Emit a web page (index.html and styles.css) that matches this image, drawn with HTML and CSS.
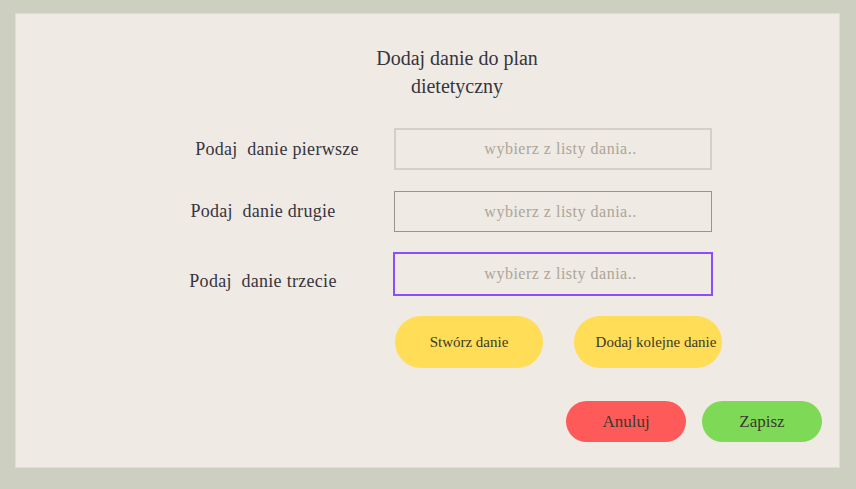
FILE: index.html
```html
<!DOCTYPE html>
<html lang="pl">
<head>
<meta charset="utf-8">
<title>Dodaj danie</title>
<link rel="stylesheet" href="styles.css">
</head>
<body>
<div class="panel">
  <h1 class="title">Dodaj danie do plan dietetyczny</h1>
  <div class="form">
    <div class="row">
      <label class="label">Podaj&nbsp; danie pierwsze</label>
      <div class="field">wybierz z listy dania..</div>
    </div>
    <div class="row">
      <label class="label label-short">Podaj&nbsp; danie drugie</label>
      <div class="field field-dark">wybierz z listy dania..</div>
    </div>
    <div class="row row-focus">
      <label class="label label-short label-low">Podaj&nbsp; danie trzecie</label>
      <div class="field field-focus">wybierz z listy dania..</div>
    </div>
    <div class="row actions">
      <button class="pill yellow">Stwórz danie</button>
      <button class="pill yellow yellow-wide">Dodaj kolejne danie</button>
    </div>
  </div>
  <div class="footer">
    <button class="pill btn red">Anuluj</button>
    <button class="pill btn green">Zapisz</button>
  </div>
</div>
</body>
</html>
```
FILE: styles.css
```css
* { box-sizing: border-box; }
html, body { margin: 0; padding: 0; }
body {
  background: #cdcfc0;
  width: 856px;
  height: 489px;
  padding: 13px 16px 21px 15px;
  font-family: "Liberation Serif", "DejaVu Serif", serif;
  color: #36353d;
}
.panel {
  background: #efeae4;
  border: 1px solid #dedfd2;
  width: 825px;
  height: 455px;
  display: flex;
  flex-direction: column;
}
.title {
  font-weight: normal;
  font-size: 20px;
  line-height: 28px;
  text-align: center;
  width: 200px;
  margin: 30px 0 0 341px;
}
.form {
  margin-top: 28px;
  display: flex;
  flex-direction: column;
  gap: 21px;
}
.row {
  display: flex;
  align-items: center;
}
.label {
  width: 234px;
  margin-left: 144px;
  text-align: center;
  font-size: 18px;
  letter-spacing: 0.3px;
}
.label-short { padding-right: 28px; }
.label-low { padding-top: 14px; }
.field {
  width: 318px;
  height: 42px;
  border: 2px solid #d4cfc8;
  display: flex;
  align-items: center;
  justify-content: center;
  padding-left: 15px;
  font-size: 16px;
  letter-spacing: 0.5px;
  color: #aca597;
}
.field-dark {
  border: 1px solid #9a958c;
  height: 41px;
}
.field-focus {
  border: 2px solid #8c4cff;
  width: 320px;
  height: 44px;
  margin-left: -1px;
}
.row-focus { margin-top: -1px; }
.actions {
  margin-top: -1px;
  padding-left: 379px;
  gap: 31px;
}
.pill {
  border: none;
  font-family: "Liberation Serif", "DejaVu Serif", serif;
  color: #3a3a2c;
  border-radius: 26px;
  cursor: pointer;
  padding: 0;
}
.yellow {
  background: #ffdd57;
  width: 148px;
  height: 52px;
  font-size: 15px;
}
.yellow-wide {
  padding-left: 16px;
  white-space: nowrap;
}
.footer {
  margin-top: 33px;
  display: flex;
  gap: 16px;
  padding-left: 550px;
}
.btn {
  width: 120px;
  height: 41px;
  border-radius: 21px;
  font-size: 17px;
}
.red { background: #ff5a5a; }
.green { background: #7ed957; }
```
